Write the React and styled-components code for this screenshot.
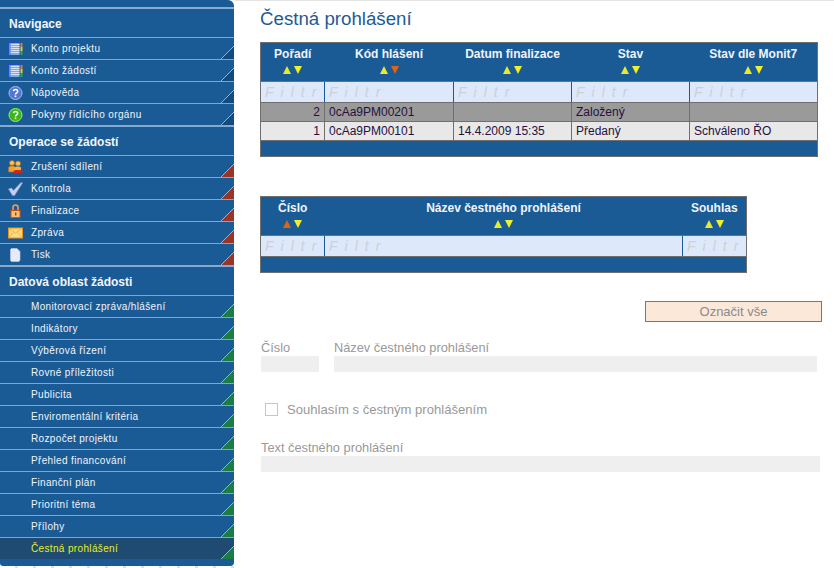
import React from "react";
import styled, { createGlobalStyle } from "styled-components";

const GlobalStyle = createGlobalStyle`
  html, body {
    margin: 0;
    padding: 0;
    background: #fff;
    font-family: "Liberation Sans", Arial, sans-serif;
  }
`;

const Page = styled.div`
  width: 834px;
  height: 568px;
  display: flex;
  overflow: hidden;
  background: #fff;
`;

const SideColumn = styled.div`
  width: 234px;
  flex: none;
  display: flex;
  flex-direction: column;
`;

const Sidebar = styled.nav`
  height: 566px;
  flex: none;
  padding-top: 7px;
  box-sizing: border-box;
  background: #1a5b96;
  border-top-right-radius: 6px;
  border-bottom-right-radius: 4px;
  border-bottom-left-radius: 3px;
`;

const SideTail = styled.div`
  height: 2px;
  background: repeating-linear-gradient(90deg, transparent 0 15px, #dedede 15px 18px);
`;

const SectionTitle = styled.div`
  height: 28px;
  border-top: 2px solid #86a9cf;
  box-sizing: content-box;
  padding-left: 9px;
  color: #f2f6fb;
  font-size: 12px;
  font-weight: 700;
  line-height: 30px;
`;

const NavRow = styled.div`
  position: relative;
  height: 21px;
  border-top: 1px solid #7ea6d0;
  display: flex;
  align-items: center;
  background: ${(p) => (p.$active ? "#1f4a72" : "transparent")};
  color: ${(p) => (p.$active ? "#e6f01e" : "#f0f4fa")};
  font-size: 10px;
  letter-spacing: 0.35px;
`;

const NavIcon = styled.span`
  width: 31px;
  height: 21px;
  flex: none;
  display: flex;
  align-items: center;
  padding-left: 8px;
  box-sizing: border-box;

  svg {
    display: block;
  }
`;

const Corner = styled.span`
  position: absolute;
  right: 0;
  bottom: 0;
  width: 13px;
  height: 13px;
  background: linear-gradient(
    135deg,
    transparent 47%,
    #8fb2d6 47%,
    #8fb2d6 52.4%,
    ${(p) => p.$fill} 52.4%
  );
`;

const Main = styled.main`
  flex: 1;
  min-width: 0;
  position: relative;
  border-top: 1px solid #e4e4e4;
  padding: 7px 12px 0 26px;
  box-sizing: border-box;
`;

const Title = styled.h1`
  margin: 0 0 13px;
  height: 21px;
  color: #1f5a92;
  font-size: 18.7px;
  font-weight: 400;
  line-height: 21px;
`;

const Table = styled.table`
  width: ${(p) => p.$width}px;
  margin-bottom: ${(p) => p.$gap}px;
  border-collapse: collapse;
  table-layout: fixed;
  border: 1px solid #6f6f6f;
  background: #1a5b96;
  font-size: 12px;
`;

const HeadCell = styled.th`
  height: 34px;
  padding: 4px 0 0;
  vertical-align: top;
  color: #f0f4fa;
  font-size: 12px;
  font-weight: 700;
  line-height: 15px;
`;

const Arrows = styled.div`
  display: flex;
  justify-content: center;
  gap: 3px;
  margin-top: 4px;
`;

const Arrow = styled.span`
  width: 0;
  height: 0;
  border-left: 4.5px solid transparent;
  border-right: 4.5px solid transparent;
  ${(p) => (p.$up ? "border-bottom" : "border-top")}: 8px solid
    ${(p) => (p.$active ? "#e0640f" : p.$up ? "#e8ea30" : "#f0f02a")};
`;

const FilterCell = styled.td`
  height: 20px;
  padding: 0 0 0 4px;
  background: #dde8fb;
  border-left: 1px solid #1a5b96;
  border-top: 1px solid #6f6f6f;
  border-bottom: 1px solid #6f6f6f;
  color: #cdd0d6;
  font-size: 14px;
  font-style: italic;
  letter-spacing: 7px;
  white-space: nowrap;
  overflow: hidden;

  &:first-child {
    border-left: none;
  }
`;

const DataCell = styled.td`
  height: 18px;
  padding: 0 4px;
  background: ${(p) => p.$bg};
  border: 1px solid #6f6f6f;
  color: #26103c;
  text-align: ${(p) => (p.$right ? "right" : "left")};
  line-height: 14px;
  white-space: nowrap;
`;

const FooterCell = styled.td`
  height: ${(p) => p.$height}px;
  padding: 0;
`;

const ButtonRow = styled.div`
  display: flex;
  justify-content: flex-end;
`;

const MarkButton = styled.button`
  width: 177px;
  height: 21px;
  padding: 0;
  background: #fce8d9;
  border: 1px solid #787878;
  color: #8a8a8a;
  font-family: inherit;
  font-size: 13px;
`;

const FieldRow = styled.div`
  display: grid;
  grid-template-columns: 58px 483px;
  column-gap: 15px;
  margin: 17px 0 0 1px;
`;

const Label = styled.label`
  display: block;
  height: 17px;
  color: #999;
  font-size: 12.8px;
  line-height: 18px;
`;

const FieldBox = styled.div`
  height: 16px;
  background: #efefef;
`;

const CheckRow = styled.div`
  display: flex;
  align-items: center;
  gap: 9px;
  margin: 29px 0 0 5px;
  height: 16px;
  color: #999;
  font-size: 13.1px;
`;

const CheckBox = styled.span`
  width: 11px;
  height: 11px;
  border: 1px solid #c9c7ba;
  background: #fff;
`;

const TextField = styled.div`
  margin: 22px 0 0 1px;
  width: 559px;
`;

const Notebook = () => (
  <svg width="15" height="14" viewBox="0 0 15 14">
    <rect x="0.5" y="0.5" width="11.500" height="13" fill="#7fa8e8" stroke="#1a52c4" />
    <path d="M2 2.500h9.500M2 4.500h9.500M2 6.500h9.500M2 8.500h9.500M2 10.500h9.500" stroke="#d4e3fa" />
    <path d="M2 1v12" stroke="#3f74d4" />
    <rect x="12.500" y="1" width="2" height="4" fill="#f07818" />
    <rect x="12.500" y="5" width="2" height="4" fill="#e8d020" />
    <rect x="12.500" y="9" width="2" height="4" fill="#28b040" />
  </svg>
);

const Help = ({ fill, edge }) => (
  <svg width="15" height="14" viewBox="0 0 15 14">
    <circle cx="7.500" cy="7" r="6.500" fill={fill} stroke={edge} />
    <path d="M5.400 5.200c.3-2.200 4.300-2.200 4.300.1 0 1.600-2.200 1.500-2.200 3.200" fill="none" stroke="#fff" strokeWidth="1.500" />
    <rect x="6.700" y="9.500" width="1.600" height="1.600" fill="#fff" />
  </svg>
);

const People = () => (
  <svg width="15" height="14" viewBox="0 0 15 14">
    <circle cx="4" cy="3" r="2.500" fill="#f8c060" stroke="#b06a10" strokeWidth="0.700" />
    <circle cx="10" cy="3.500" r="2.500" fill="#f8c060" stroke="#b06a10" strokeWidth="0.700" />
    <path d="M0.500 12V8C0.500 6.500 2 6 4 6s3.500.5 3.500 2v4Z" fill="#f4a030" stroke="#b06a10" strokeWidth="0.600" />
    <path d="M6.500 10V8c0-1 1.500-1.500 3.500-1.500s3 .5 3 1.500v2Z" fill="#f4b040" />
    <path d="M5 12.500c0-2 2-2.500 5-2.500s5 .5 5 1.500-1 1.500-2 1.500H6Z" fill="#d0281c" />
  </svg>
);

const Check = () => (
  <svg width="15" height="14" viewBox="0 0 15 14">
    <path d="M0.500 7 3.500 6l2 2.500L13 0.500 14.500 1 6.500 13.500H4.500Z" fill="#c8d0f2" stroke="#8595dc" strokeWidth="0.700" />
  </svg>
);

const Lock = () => (
  <svg width="15" height="14" viewBox="0 0 15 14">
    <path d="M5 7V3.500a2.500 2.500 0 0 1 5 0V7" fill="none" stroke="#f0a040" strokeWidth="1.600" />
    <rect x="3" y="6.500" width="9" height="7" fill="#f8c070" stroke="#d0501c" />
    <rect x="7" y="8.500" width="1.400" height="3" fill="#a04010" />
  </svg>
);

const Mail = () => (
  <svg width="15" height="14" viewBox="0 0 15 14">
    <rect x="0.500" y="2" width="14" height="10" fill="#fcdc80" stroke="#f09018" />
    <path d="M1 2.500l6.500 4.500L14 2.500M1 11.500l4.500-5M14 11.500 9.500 6.500" fill="none" stroke="#f6b040" />
  </svg>
);

const Doc = () => (
  <svg width="15" height="14" viewBox="0 0 15 14">
    <path d="M2.500 1.500 3.500 0.500h5.500l3 3V12l-1 1.500H3.500l-1-1Z" fill="#e8eafc" stroke="#c8cdf4" strokeWidth="0.600" />
  </svg>
);

const SECTIONS = [
  {
    title: "Navigace",
    fill: "#154a7d",
    items: [
      { label: "Konto projektu", icon: <Notebook /> },
      { label: "Konto žádostí", icon: <Notebook /> },
      { label: "Nápověda", icon: <Help fill="#5478d0" edge="#a8bcf0" /> },
      { label: "Pokyny řídícího orgánu", icon: <Help fill="#38b818" edge="#a0ec60" /> },
    ],
  },
  {
    title: "Operace se žádostí",
    fill: "#983526",
    items: [
      { label: "Zrušení sdílení", icon: <People /> },
      { label: "Kontrola", icon: <Check /> },
      { label: "Finalizace", icon: <Lock /> },
      { label: "Zpráva", icon: <Mail /> },
      { label: "Tisk", icon: <Doc /> },
    ],
  },
  {
    title: "Datová oblast žádosti",
    fill: "#1c7c45",
    items: [
      { label: "Monitorovací zpráva/hlášení" },
      { label: "Indikátory" },
      { label: "Výběrová řízení" },
      { label: "Rovné příležitosti" },
      { label: "Publicita" },
      { label: "Enviromentální kritéria" },
      { label: "Rozpočet projektu" },
      { label: "Přehled financování" },
      { label: "Finanční plán" },
      { label: "Prioritní téma" },
      { label: "Přílohy" },
      { label: "Čestná prohlášení", active: true },
    ],
  },
];

const REPORT_COLS = [
  { label: "Pořadí", width: 64 },
  { label: "Kód hlášení", width: 129, down: true },
  { label: "Datum finalizace", width: 118 },
  { label: "Stav", width: 118 },
  { label: "Stav dle Monit7", width: 128 },
];

const REPORT_ROWS = [
  { bg: "#9a9a9a", cells: ["2", "0cAa9PM00201", "", "Založený", ""] },
  { bg: "#e8e8e8", cells: ["1", "0cAa9PM00101", "14.4.2009 15:35", "Předaný", "Schváleno ŘO"] },
];

const DECL_COLS = [
  { label: "Číslo", width: 64, up: true },
  { label: "Název čestného prohlášení", width: 358 },
  { label: "Souhlas", width: 64 },
];

function SortArrows({ up, down }) {
  return (
    <Arrows>
      <Arrow $up $active={up} />
      <Arrow $active={down} />
    </Arrows>
  );
}

function GridTable({ cols, rows = [], width, gap, footer }) {
  return (
    <Table $width={width} $gap={gap}>
      <colgroup>
        {cols.map((c) => (
          <col key={c.label} style={{ width: c.width }} />
        ))}
      </colgroup>
      <thead>
        <tr>
          {cols.map((c) => (
            <HeadCell key={c.label}>
              {c.label}
              <SortArrows up={c.up} down={c.down} />
            </HeadCell>
          ))}
        </tr>
      </thead>
      <tbody>
        <tr>
          {cols.map((c) => (
            <FilterCell key={c.label}>Filtr</FilterCell>
          ))}
        </tr>
        {rows.map((r) => (
          <tr key={r.cells[1]}>
            {r.cells.map((v, i) => (
              <DataCell key={i} $bg={r.bg} $right={i === 0}>
                {v}
              </DataCell>
            ))}
          </tr>
        ))}
        <tr>
          <FooterCell colSpan={cols.length} $height={footer} />
        </tr>
      </tbody>
    </Table>
  );
}

export default function App() {
  return (
    <Page>
      <GlobalStyle />
      <SideColumn>
        <Sidebar>
          {SECTIONS.map((s) => (
            <div key={s.title}>
              <SectionTitle>{s.title}</SectionTitle>
              {s.items.map((item) => (
                <NavRow key={item.label} $active={item.active}>
                  <NavIcon>{item.icon}</NavIcon>
                  {item.label}
                  <Corner $fill={s.fill} />
                </NavRow>
              ))}
            </div>
          ))}
        </Sidebar>
        <SideTail />
      </SideColumn>
      <Main>
        <Title>Čestná prohlášení</Title>
        <GridTable cols={REPORT_COLS} rows={REPORT_ROWS} width={558} gap={39} footer={15} />
        <GridTable cols={DECL_COLS} width={486} gap={28} footer={15} />
        <ButtonRow>
          <MarkButton>Označit vše</MarkButton>
        </ButtonRow>
        <FieldRow>
          <div>
            <Label>Číslo</Label>
            <FieldBox />
          </div>
          <div>
            <Label>Název čestného prohlášení</Label>
            <FieldBox />
          </div>
        </FieldRow>
        <CheckRow>
          <CheckBox />
          Souhlasím s čestným prohlášením
        </CheckRow>
        <TextField>
          <Label>Text čestného prohlášení</Label>
          <FieldBox />
        </TextField>
      </Main>
    </Page>
  );
}
